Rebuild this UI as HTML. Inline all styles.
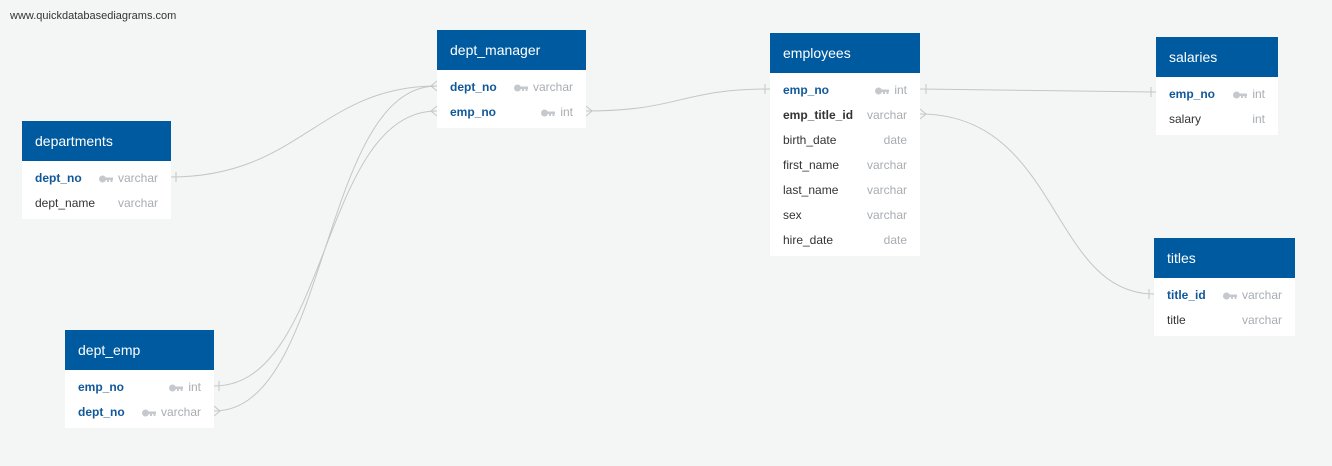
<!DOCTYPE html>
<html><head><style>
*{margin:0;padding:0;box-sizing:border-box}
body{width:1332px;height:466px;background:#f4f6f5;position:relative;overflow:hidden;font-family:"Liberation Sans",Arial,sans-serif}
.site{position:absolute;left:10px;top:10px;font-size:11px;color:#333}
.t{position:absolute;background:#fff;padding-bottom:3px}
.h{background:#005a9f;color:#fff;font-size:14px;height:40px;line-height:40px;padding-left:13px}
.b{padding-top:5px}
.r{height:25px;line-height:25px;font-size:12px;color:#333;padding:0 13px;display:flex;justify-content:space-between}
.r .n.k{color:#11589a;font-weight:bold}
.r .n.k2{color:#333;font-weight:bold}
.ty{color:#a8adb2;display:flex;align-items:center}
.key{width:14px;height:8px;margin-right:5px}
svg.l{position:absolute;left:0;top:0}
</style></head><body>
<div class="site">www.quickdatabasediagrams.com</div>
<svg class="l" width="1332" height="466" fill="none" stroke="#c3c6c8" stroke-width="1">
<path d="M171,177 C300,177 320,86 437,86"/>
<path d="M176,172 V182"/>
<path d="M214,386 C330,386 320,111 437,111"/>
<path d="M219,381 V391"/>
<path d="M214,411 C330,411 320,86 437,86"/>
<path d="M214,406 L220,411 L214,416"/>
<path d="M437,81 L431,86 L437,91"/>
<path d="M437,106 L431,111 L437,116"/>
<path d="M586,111 C680,111 680,89 770,89"/>
<path d="M586,106 L592,111 L586,116"/>
<path d="M765,84 V94"/>
<path d="M920,89 L1156,92"/>
<path d="M926,84 V94"/>
<path d="M1151,87 V97"/>
<path d="M920,114 C1060,114 1050,294 1154,294"/>
<path d="M920,109 L926,114 L920,119"/>
<path d="M1149,289 V299"/>
</svg>
<svg width="0" height="0" style="position:absolute"><defs><symbol id="k" viewBox="0 0 14 8"><circle cx="3.5" cy="4" r="3.5" fill="#c5c9cd"/><rect x="5" y="2.5" width="9" height="2.5" fill="#c5c9cd"/><rect x="8" y="4" width="2" height="3" fill="#c5c9cd"/><rect x="11.5" y="4" width="2" height="3" fill="#c5c9cd"/></symbol></defs></svg>

<div class="t" style="left:437px;top:30px;width:149px"><div class="h">dept_manager</div><div class="b">
<div class="r"><span class="n k">dept_no</span><span class="ty"><svg class="key"><use href="#k"/></svg>varchar</span></div>
<div class="r"><span class="n k">emp_no</span><span class="ty"><svg class="key"><use href="#k"/></svg>int</span></div></div></div>

<div class="t" style="left:770px;top:33px;width:150px"><div class="h">employees</div><div class="b">
<div class="r"><span class="n k">emp_no</span><span class="ty"><svg class="key"><use href="#k"/></svg>int</span></div>
<div class="r"><span class="n k2">emp_title_id</span><span class="ty">varchar</span></div>
<div class="r"><span class="n">birth_date</span><span class="ty">date</span></div>
<div class="r"><span class="n">first_name</span><span class="ty">varchar</span></div>
<div class="r"><span class="n">last_name</span><span class="ty">varchar</span></div>
<div class="r"><span class="n">sex</span><span class="ty">varchar</span></div>
<div class="r"><span class="n">hire_date</span><span class="ty">date</span></div></div></div>

<div class="t" style="left:22px;top:121px;width:149px"><div class="h">departments</div><div class="b">
<div class="r"><span class="n k">dept_no</span><span class="ty"><svg class="key"><use href="#k"/></svg>varchar</span></div>
<div class="r"><span class="n">dept_name</span><span class="ty">varchar</span></div></div></div>

<div class="t" style="left:65px;top:330px;width:149px"><div class="h">dept_emp</div><div class="b">
<div class="r"><span class="n k">emp_no</span><span class="ty"><svg class="key"><use href="#k"/></svg>int</span></div>
<div class="r"><span class="n k">dept_no</span><span class="ty"><svg class="key"><use href="#k"/></svg>varchar</span></div></div></div>

<div class="t" style="left:1156px;top:37px;width:122px"><div class="h">salaries</div><div class="b">
<div class="r"><span class="n k">emp_no</span><span class="ty"><svg class="key"><use href="#k"/></svg>int</span></div>
<div class="r"><span class="n">salary</span><span class="ty">int</span></div></div></div>

<div class="t" style="left:1154px;top:238px;width:141px"><div class="h">titles</div><div class="b">
<div class="r"><span class="n k">title_id</span><span class="ty"><svg class="key"><use href="#k"/></svg>varchar</span></div>
<div class="r"><span class="n">title</span><span class="ty">varchar</span></div></div></div>
</body></html>
